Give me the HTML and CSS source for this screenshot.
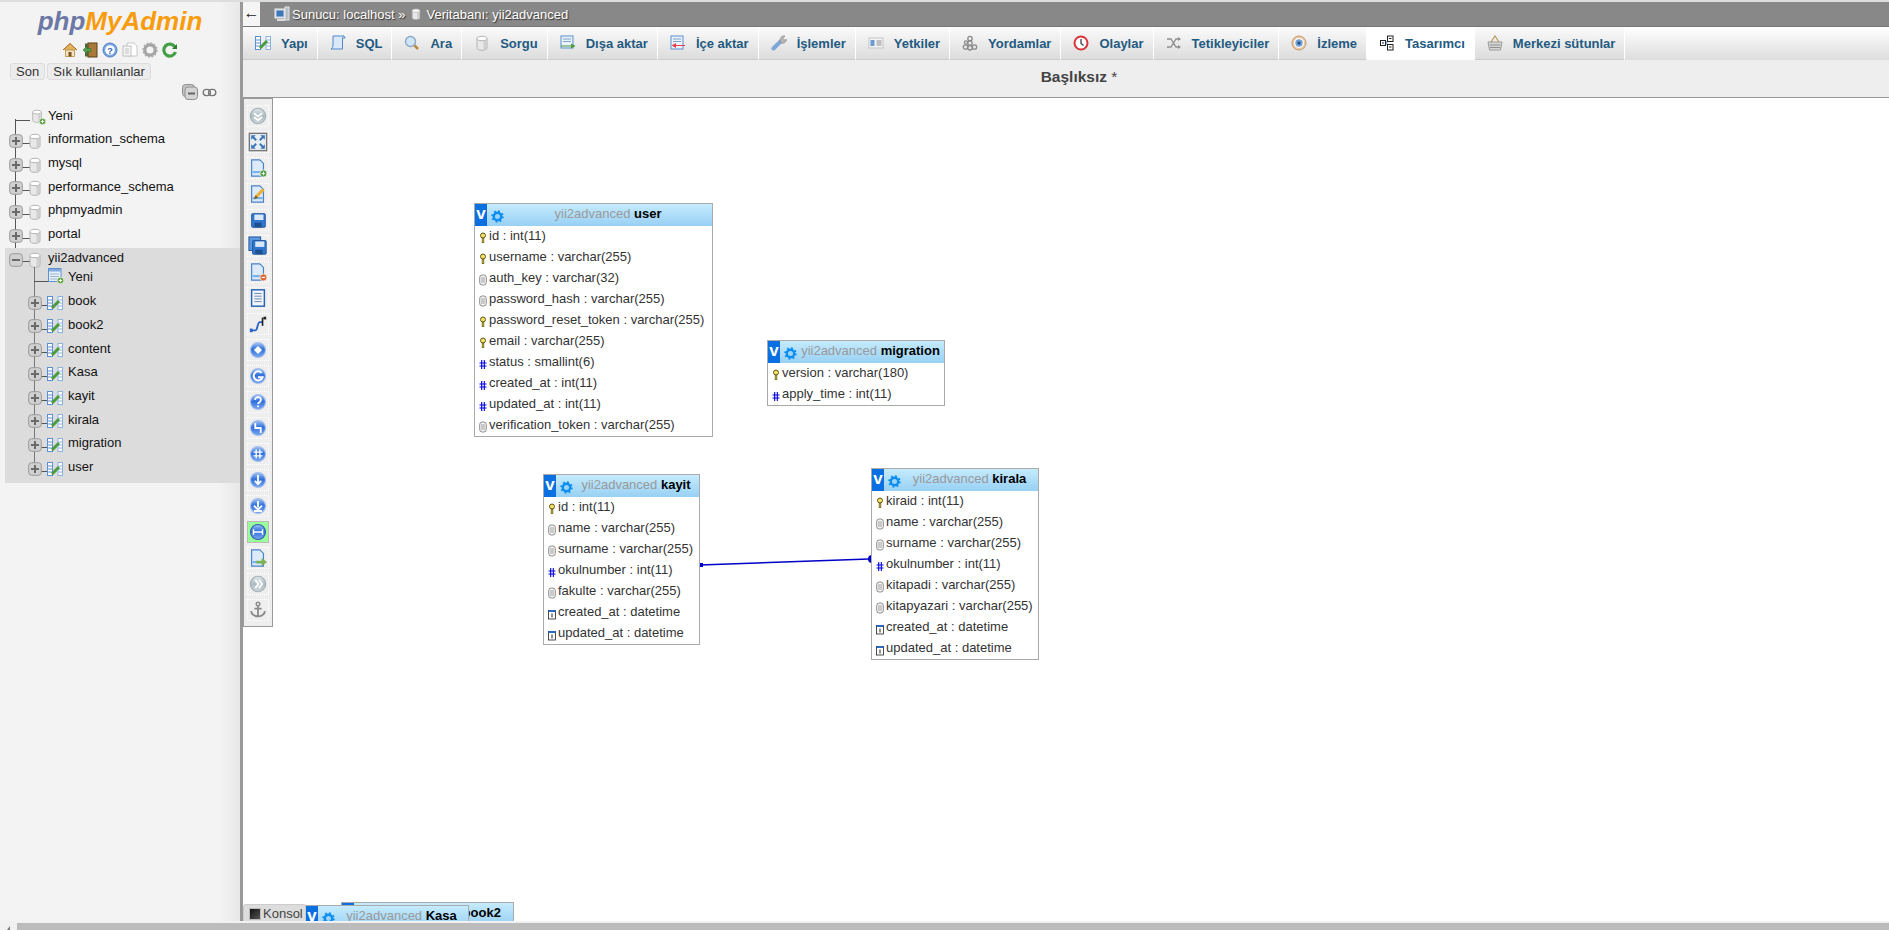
FILE: index.html
```html
<!DOCTYPE html>
<html lang="tr">
<head>
<meta charset="utf-8">
<title>phpMyAdmin</title>
<link rel="stylesheet" href="styles.css">
</head>
<body>
<svg class="defs" width="0" height="0">
  <defs>
    <linearGradient id="gb" x1="0" y1="0" x2="0" y2="1"><stop offset="0" stop-color="#a6c6f4"/><stop offset=".45" stop-color="#2f6fdc"/><stop offset="1" stop-color="#7aa8ee"/></linearGradient>
    <linearGradient id="gg" x1="0" y1="0" x2="0" y2="1"><stop offset="0" stop-color="#dfe6ea"/><stop offset=".5" stop-color="#aebcc3"/><stop offset="1" stop-color="#cdd6da"/></linearGradient>
    <symbol id="i-db" viewBox="0 0 16 16"><path d="M3 3.500v9.500c0 1.400 2.300 2.300 5 2.300s5-.9 5-2.300V3.500z" fill="#e8e8e8" stroke="#b4b4b4"/><ellipse cx="8" cy="3.500" rx="5" ry="2.200" fill="#fff" stroke="#b4b4b4"/><rect x="9.500" y="6" width="2.500" height="8" fill="#cfcfcf"/></symbol>
    <symbol id="i-plus" viewBox="0 0 14 14"><rect x=".7" y=".7" width="12.600" height="12.600" rx="3" fill="#d0d0d0" stroke="#9a9a9a"/><path d="M3 7h8M7 3v8" stroke="#6a6a6a" stroke-width="2"/></symbol>
    <symbol id="i-minus" viewBox="0 0 14 14"><rect x=".7" y=".7" width="12.600" height="12.600" rx="3" fill="#d0d0d0" stroke="#9a9a9a"/><path d="M3 7h8" stroke="#6a6a6a" stroke-width="2"/></symbol>
    <symbol id="i-struct" viewBox="0 0 16 16"><rect x=".5" y="1.500" width="5" height="13" fill="#fff" stroke="#5b8fd0"/><path d="M1 5h4M1 8h4M1 11h4" stroke="#5b8fd0"/><rect x="11" y="1.500" width="4.500" height="13" fill="#fff" stroke="#8ab2df"/><path d="M11.500 5h4M11.500 8h4M11.500 11h4" stroke="#8ab2df"/><path d="M5 13l7-7" stroke="#4c9a3a" stroke-width="3"/></symbol>
    <symbol id="i-newtable" viewBox="0 0 16 16"><rect x=".5" y=".5" width="12.500" height="13" fill="#e6f0fb" stroke="#5b8fd0"/><rect x="1" y="1" width="11.500" height="2.500" fill="#7fa9dc"/><path d="M2 6h9M2 8.500h9M2 11h9" stroke="#9db5d3"/><circle cx="12.500" cy="12.500" r="3.300" fill="#5aa13d" stroke="#fff" stroke-width=".6"/><path d="M10.800 12.500h3.400M12.500 10.800v3.400" stroke="#fff"/></symbol>
    <symbol id="i-newdb" viewBox="0 0 16 16"><use href="#i-db" width="14" height="14"/><circle cx="12.500" cy="12.500" r="3.300" fill="#5aa13d" stroke="#fff" stroke-width=".6"/><path d="M10.800 12.500h3.400M12.500 10.800v3.400" stroke="#fff"/></symbol>
    <symbol id="i-home" viewBox="0 0 16 16"><path d="M1 8l7-6.500L15 8" fill="#e2b25f" stroke="#a6671e"/><rect x="3.500" y="8" width="9" height="6.500" fill="#f3e2bb" stroke="#a6832f" stroke-width=".7"/><rect x="6.500" y="10" width="3" height="4.500" fill="#7c5220"/></symbol>
    <symbol id="i-exit" viewBox="0 0 16 16"><rect x="6" y="1" width="9" height="14" fill="#a87a3a" stroke="#5d4218"/><rect x="3" y="1.500" width="3" height="13" fill="#53633f"/><path d="M1 8l4-4v2.500h4v3H5V12z" fill="#4fa24a" stroke="#2d6a2d" stroke-width=".5"/></symbol>
    <symbol id="i-help" viewBox="0 0 16 16"><circle cx="8" cy="8" r="7" fill="#7aa6e3" stroke="#4f7fc2"/><circle cx="8" cy="8" r="4.800" fill="#fff"/><text x="8" y="11.500" class="icon-q">?</text></symbol>
    <symbol id="i-doc" viewBox="0 0 16 16"><path d="M5 1h7l3 3v10H5z" fill="#fff" stroke="#c8c8c8"/><rect x="1" y="4" width="8" height="10" fill="#f5f5f5" stroke="#c0c0c0"/><rect x="3" y="6" width="4" height="6" fill="#dcdcdc"/></symbol>
    <symbol id="i-gear" viewBox="0 0 16 16"><circle cx="8" cy="8" r="5.200" fill="none" stroke="#a4a4a4" stroke-width="3.200"/><circle cx="8" cy="8" r="6.800" fill="none" stroke="#b0b0b0" stroke-width="1.800" stroke-dasharray="2 1.560"/></symbol>
    <symbol id="i-reload" viewBox="0 0 16 16"><path d="M13 5a6 6 0 1 0 .5 5" fill="none" stroke="#43a047" stroke-width="3.200"/><path d="M10 7h5V2z" fill="#2e7d32"/></symbol>
    <symbol id="i-collapse" viewBox="0 0 16 16"><rect x=".5" y=".5" width="12" height="12" rx="3" fill="#c4c4c4" stroke="#8f8f8f"/><rect x="3" y="3" width="12.500" height="12.500" rx="3" fill="#d4d4d4" stroke="#8f8f8f"/><path d="M6 9.500h7" stroke="#666" stroke-width="2"/></symbol>
    <symbol id="i-link" viewBox="0 0 16 10"><rect x="1" y="1.500" width="8" height="7" rx="3.500" fill="none" stroke="#777" stroke-width="1.500"/><rect x="7" y="1.500" width="8" height="7" rx="3.500" fill="none" stroke="#777" stroke-width="1.500"/></symbol>
    <symbol id="i-server" viewBox="0 0 16 16"><rect x="1" y="3" width="10" height="9" fill="#cfd8e3" stroke="#eee"/><rect x="2.500" y="4.500" width="7" height="6" fill="#3e77b8"/><rect x="11" y="1" width="4" height="13" fill="#b7bec6" stroke="#e4e4e4"/><path d="M3 14h8" stroke="#ddd" stroke-width="2"/></symbol>
    <symbol id="i-sql" viewBox="0 0 16 16"><path d="M3 1h11c-1.500 1-1.500 2-1.500 4v9H1c1.500-1 2-2 2-4z" fill="#d9e9fa" stroke="#4f86c6"/><path d="M13 1c1.500 0 2 1 2 2h-2" fill="#d9e9fa" stroke="#4f86c6"/></symbol>
    <symbol id="i-search" viewBox="0 0 16 16"><path d="M9.500 9.500L14 14" stroke="#c08a45" stroke-width="2.600"/><circle cx="6.500" cy="6.500" r="5" fill="#cfe5fa" stroke="#8fa9c4" stroke-width="1.400"/></symbol>
    <symbol id="i-export" viewBox="0 0 16 16"><rect x="1" y="1" width="12" height="12" fill="#eaf2fb" stroke="#5b8fd0"/><path d="M3 4h8M3 6.500h8" stroke="#7fa3cd"/><path d="M1 10.500h10V8.500l4.500 2.500L11 13.500v-2H1z" fill="#4c9a3a"/></symbol>
    <symbol id="i-import" viewBox="0 0 16 16"><rect x="1" y="1" width="12" height="13" fill="#eaf2fb" stroke="#5b8fd0"/><path d="M3 4h8M3 6.500h8" stroke="#7fa3cd"/><path d="M15 10H6V8l-4.500 2.500L6 13v-2h9z" fill="#e8404a"/></symbol>
    <symbol id="i-wrench" viewBox="0 0 16 16"><path d="M2.500 13.500l7-7" stroke="#7ea5d8" stroke-width="4" stroke-linecap="round"/><path d="M9 5a4 4 0 0 1 5-4l-2 2.500 1 1.500 2.500-.5A4 4 0 0 1 10 8z" fill="#b6b6b6" stroke="#8a8a8a" stroke-width=".6"/></symbol>
    <symbol id="i-priv" viewBox="0 0 16 16"><rect x="1" y="3" width="14" height="10" fill="#f4f4f4" stroke="#c4c4c4"/><rect x="2.500" y="5" width="4" height="6" fill="#6c9ad3"/><path d="M8.500 6h5M8.500 8h5M8.500 10h5" stroke="#8d8d8d"/></symbol>
    <symbol id="i-routines" viewBox="0 0 16 16"><g fill="none" stroke="#8b8b8b" stroke-width="1.300"><circle cx="8" cy="3.500" r="2.200"/><circle cx="8" cy="8" r="2.200"/><circle cx="3.500" cy="12" r="2.200"/><circle cx="8" cy="12.800" r="2.200"/><circle cx="12.500" cy="12" r="2.200"/><circle cx="4" cy="7.500" r="1.600"/></g></symbol>
    <symbol id="i-clock" viewBox="0 0 16 16"><circle cx="8" cy="8" r="6.500" fill="#fff" stroke="#d8353a" stroke-width="2"/><path d="M8 4v4.500l2.500 2" fill="none" stroke="#333" stroke-width="1.200"/></symbol>
    <symbol id="i-trigger" viewBox="0 0 16 16"><path d="M1 4h4l5 8h4M1 12h4l5-8h4" fill="none" stroke="#8f8f8f" stroke-width="1.300"/><path d="M12 2l3 2-3 2zM12 10l3 2-3 2z" fill="#8f8f8f"/></symbol>
    <symbol id="i-eye" viewBox="0 0 16 16"><circle cx="8" cy="8" r="7" fill="#ecc9a5" stroke="#c49a6c"/><circle cx="8" cy="8" r="5" fill="#fff"/><circle cx="8" cy="8" r="3.700" fill="#6e9fd6"/><circle cx="8" cy="8" r="1.500" fill="#24466f"/></symbol>
    <symbol id="i-designer" viewBox="0 0 16 16"><g fill="#fff" stroke="#222"><rect x="8.500" y="1" width="5.500" height="5.500"/><rect x="8.500" y="9.500" width="5.500" height="5.500"/><rect x="1.500" y="5.500" width="5" height="5"/></g><path d="M10 3.500h2.500M10 12h2.500M3 8h2" stroke="#222"/><path d="M6.500 7h2M6.500 9h2" stroke="#1b5fb3"/></symbol>
    <symbol id="i-basket" viewBox="0 0 16 16"><path d="M1 7h14l-1.500 8h-11z" fill="#d6d6d6" stroke="#9a9a9a"/><path d="M4 7l4-6 4 6" fill="none" stroke="#b79a5a" stroke-width="1.200"/><path d="M3 10h10M3 12.500h10" stroke="#8f8f8f"/></symbol>
    <symbol id="i-key" viewBox="0 0 8 12"><circle cx="4" cy="3.500" r="2.500" fill="#f3e066" stroke="#5f5614"/><path d="M4 6v5" stroke="#5f5614" stroke-width="2.400"/><path d="M4 6.500v4" stroke="#e9d455" stroke-width=".9"/></symbol>
    <symbol id="i-text" viewBox="0 0 8 12"><rect x=".7" y="1" width="6.600" height="10" rx="2.500" fill="#f3f3f3" stroke="#8c8c8c"/><path d="M2 4h4M2 6h4M2 8h4" stroke="#8c8c8c" stroke-width=".8"/></symbol>
    <symbol id="i-num" viewBox="0 0 8 12"><path d="M2.700 2v9M5.300 2v9M.5 5h7M.5 8h7" stroke="#0000e0" stroke-width="1.100" fill="none"/></symbol>
    <symbol id="i-date" viewBox="0 0 8 12"><rect x=".5" y="2.500" width="7" height="8.500" fill="#fff" stroke="#222" stroke-width=".8"/><rect x=".5" y="2" width="7" height="2" fill="#2769c9"/><path d="M4 5.500v4" stroke="#222"/></symbol>
    <symbol id="i-cog" viewBox="0 0 14 14"><circle cx="7" cy="7" r="4" fill="#9fd4f7" stroke="#0c8ff0" stroke-width="2.600"/><circle cx="7" cy="7" r="5.800" fill="none" stroke="#0c8ff0" stroke-width="1.800" stroke-dasharray="2 2.550"/></symbol>
    <symbol id="t-gray" viewBox="0 0 22 22"><circle cx="11" cy="11" r="8.500" fill="url(#gg)" stroke="#a3b1b7" stroke-width="1.200"/></symbol>
    <symbol id="t-round" viewBox="0 0 22 22"><circle cx="11" cy="11" r="8.250" fill="url(#gb)" stroke="#a4c0ec" stroke-width="1.200"/></symbol>
    <symbol id="t-down" viewBox="0 0 22 22"><use href="#t-gray"/><path d="M6.500 8l4.500 3.500L15.500 8M6.500 12l4.500 3.500 4.500-3.500" fill="none" stroke="#fff" stroke-width="2"/></symbol>
    <symbol id="t-right" viewBox="0 0 22 22"><use href="#t-gray"/><path d="M8 6.500l3.500 4.500L8 15.500M12 6.500l3.500 4.500-3.500 4.500" fill="none" stroke="#fff" stroke-width="2"/></symbol>
    <symbol id="t-full" viewBox="0 0 22 22"><rect x="1.500" y="1.500" width="19" height="19" fill="#e9eef4" stroke="#777" stroke-width="1.500"/><path d="M5 5l4 4M17 5l-4 4M5 17l4-4M17 17l-4-4" stroke="#3c75b6" stroke-width="2.200"/><path d="M3.500 3.500h5l-5 5zM18.500 3.500h-5l5 5zM3.500 18.500h5l-5-5zM18.500 18.500h-5l5-5z" fill="#3c75b6"/></symbol>
    <symbol id="t-page" viewBox="0 0 22 22"><path d="M4 2h9l4 4v14H4z" fill="#dcebfb" stroke="#4a82c8" stroke-width="1.300"/><path d="M5 15.500h11" stroke="#78b4ea" stroke-width="2.400"/></symbol>
    <symbol id="t-add" viewBox="0 0 22 22"><use href="#t-page"/><circle cx="17" cy="17" r="3.800" fill="#4a9a3a" stroke="#fff" stroke-width=".7"/><path d="M15 17h4M17 15v4" stroke="#fff"/></symbol>
    <symbol id="t-edit" viewBox="0 0 22 22"><use href="#t-page"/><path d="M8 15l9-9" stroke="#e8b23c" stroke-width="3.600"/><path d="M8.500 12.500l-2 4.500 4.500-2z" fill="#7a5a2a"/></symbol>
    <symbol id="t-del" viewBox="0 0 22 22"><use href="#t-page"/><circle cx="17" cy="17" r="3.800" fill="#e0602a" stroke="#fff" stroke-width=".7"/><path d="M15 17h4" stroke="#fff" stroke-width="1.400"/></symbol>
    <symbol id="t-pexp" viewBox="0 0 22 22"><use href="#t-page"/><path d="M9 14h6v-3l6 4.500-6 4.500v-3H9z" fill="#7cb35a"/></symbol>
    <symbol id="t-save" viewBox="0 0 22 22"><rect x="4" y="4" width="15" height="15" rx="1" fill="#2f77cf" stroke="#1d549b"/><rect x="7" y="5" width="10" height="6" fill="#d8e8f8"/><rect x="7" y="14" width="8" height="5" fill="#1e4f8e"/></symbol>
    <symbol id="t-save2" viewBox="0 0 22 22"><rect x="1" y="1" width="13" height="15" fill="#5b97df" stroke="#1d549b"/><rect x="5" y="5" width="15" height="15" rx="1" fill="#2f77cf" stroke="#1d549b"/><rect x="8" y="6" width="10" height="6" fill="#d8e8f8"/><rect x="8" y="15" width="8" height="5" fill="#1e4f8e"/></symbol>
    <symbol id="t-list" viewBox="0 0 22 22"><rect x="4" y="2" width="14" height="18" fill="#f2f6fb" stroke="#2a63b5" stroke-width="1.600"/><path d="M7 6h8M7 9h8M7 12h8M7 15h8" stroke="#5a7da8"/></symbol>
    <symbol id="t-rel" viewBox="0 0 22 22"><path d="M3 18h5c3 0 2-9 5-9h3" fill="none" stroke="#2a63c5" stroke-width="2"/><path d="M16 4v9" stroke="#222" stroke-width="1.800"/><rect x="17" y="3" width="3" height="3" fill="#222"/><rect x="2" y="16" width="3" height="4" fill="#2a63c5"/></symbol>
    <symbol id="t-r1" viewBox="0 0 22 22"><use href="#t-round"/><path d="M11 6.500l4.500 4.500-4.500 4.500L6.500 11z" fill="#fff"/></symbol>
    <symbol id="t-r2" viewBox="0 0 22 22"><use href="#t-round"/><path d="M15 7.500a5 5 0 1 0 1 5h-5" fill="none" stroke="#fff" stroke-width="2.200"/></symbol>
    <symbol id="t-r3" viewBox="0 0 22 22"><use href="#t-round"/><path d="M7.800 8.800c0-4.300 6.800-4 6.400 0 0 2.400-3.200 2.400-3.200 4.500" fill="none" stroke="#fff" stroke-width="2"/><circle cx="11" cy="15.700" r="1.200" fill="#fff"/></symbol>
    <symbol id="t-r4" viewBox="0 0 22 22"><use href="#t-round"/><path d="M8 5.500V11h6v5.500" fill="none" stroke="#fff" stroke-width="2"/></symbol>
    <symbol id="t-r5" viewBox="0 0 22 22"><use href="#t-round"/><path d="M9 6v10M13 6v10M6 9h10M6 13h10" stroke="#fff" stroke-width="1.500"/></symbol>
    <symbol id="t-r6" viewBox="0 0 22 22"><use href="#t-round"/><path d="M11 5.500v10M7.500 12l3.500 3.500 3.500-3.500" fill="none" stroke="#fff" stroke-width="2"/></symbol>
    <symbol id="t-r7" viewBox="0 0 22 22"><use href="#t-round"/><path d="M11 5.500v7M6.500 10.500l4.500 4.500 4.500-4.500M6.500 16.500h9" fill="none" stroke="#fff" stroke-width="2"/></symbol>
    <symbol id="t-r8" viewBox="0 0 22 22"><circle cx="11" cy="11" r="8.250" fill="url(#gb)" stroke="#2f5fb0" stroke-width="1.200"/><path d="M6 11h10M6 8v6M16 8v6" fill="none" stroke="#fff" stroke-width="1.600"/></symbol>
    <symbol id="t-anchor" viewBox="0 0 22 22"><circle cx="11" cy="4.500" r="2" fill="none" stroke="#8a8a8a" stroke-width="1.500"/><path d="M11 6.500V18M7 9.500h8M3.500 12c0 4 4 6 7.500 6s7.500-2 7.500-6" fill="none" stroke="#8a8a8a" stroke-width="2"/></symbol>
  </defs>
</svg>

<div class="page">
  <aside class="nav">
    <div class="logo"><span class="logo-php">php</span><span class="logo-my">MyAdmin</span></div>
    <div class="nav-icons">
      <svg class="ic16"><use href="#i-home"/></svg>
      <svg class="ic16"><use href="#i-exit"/></svg>
      <svg class="ic16"><use href="#i-help"/></svg>
      <svg class="ic16"><use href="#i-doc"/></svg>
      <svg class="ic16"><use href="#i-gear"/></svg>
      <svg class="ic16"><use href="#i-reload"/></svg>
    </div>
    <div class="nav-tabs"><span class="nav-tab">Son</span><span class="nav-tab">Sık kullanılanlar</span></div>
    <div class="nav-tools">
      <svg class="ic16"><use href="#i-collapse"/></svg>
      <svg class="ic-link"><use href="#i-link"/></svg>
    </div>
    <ul class="tree">
      <li class="node node-first"><svg class="ic16"><use href="#i-newdb"/></svg><span>Yeni</span></li>
      <li class="node"><svg class="ic-exp"><use href="#i-plus"/></svg><svg class="ic16"><use href="#i-db"/></svg><span>information_schema</span></li>
      <li class="node"><svg class="ic-exp"><use href="#i-plus"/></svg><svg class="ic16"><use href="#i-db"/></svg><span>mysql</span></li>
      <li class="node"><svg class="ic-exp"><use href="#i-plus"/></svg><svg class="ic16"><use href="#i-db"/></svg><span>performance_schema</span></li>
      <li class="node"><svg class="ic-exp"><use href="#i-plus"/></svg><svg class="ic16"><use href="#i-db"/></svg><span>phpmyadmin</span></li>
      <li class="node"><svg class="ic-exp"><use href="#i-plus"/></svg><svg class="ic16"><use href="#i-db"/></svg><span>portal</span></li>
      <li class="open-db">
        <div class="node"><svg class="ic-exp"><use href="#i-minus"/></svg><svg class="ic16"><use href="#i-db"/></svg><span>yii2advanced</span></div>
        <ul class="subtree">
          <li class="node sub-new"><svg class="ic16"><use href="#i-newtable"/></svg><span>Yeni</span></li>
          <li class="node"><svg class="ic-exp"><use href="#i-plus"/></svg><svg class="ic16"><use href="#i-struct"/></svg><span>book</span></li>
          <li class="node"><svg class="ic-exp"><use href="#i-plus"/></svg><svg class="ic16"><use href="#i-struct"/></svg><span>book2</span></li>
          <li class="node"><svg class="ic-exp"><use href="#i-plus"/></svg><svg class="ic16"><use href="#i-struct"/></svg><span>content</span></li>
          <li class="node"><svg class="ic-exp"><use href="#i-plus"/></svg><svg class="ic16"><use href="#i-struct"/></svg><span>Kasa</span></li>
          <li class="node"><svg class="ic-exp"><use href="#i-plus"/></svg><svg class="ic16"><use href="#i-struct"/></svg><span>kayit</span></li>
          <li class="node"><svg class="ic-exp"><use href="#i-plus"/></svg><svg class="ic16"><use href="#i-struct"/></svg><span>kirala</span></li>
          <li class="node"><svg class="ic-exp"><use href="#i-plus"/></svg><svg class="ic16"><use href="#i-struct"/></svg><span>migration</span></li>
          <li class="node"><svg class="ic-exp"><use href="#i-plus"/></svg><svg class="ic16"><use href="#i-struct"/></svg><span>user</span></li>
        </ul>
      </li>
    </ul>
  </aside>

  <main class="main">
    <div class="crumbs">
      <span class="back">←</span>
      <svg class="ic16"><use href="#i-server"/></svg><span>Sunucu: localhost »</span>
      <svg class="ic-crumbdb"><use href="#i-db"/></svg><span>Veritabanı: yii2advanced</span>
    </div>
    <nav class="tabs">
      <a class="tab"><svg class="ic16"><use href="#i-struct"/></svg>Yapı</a>
      <a class="tab"><svg class="ic16"><use href="#i-sql"/></svg>SQL</a>
      <a class="tab"><svg class="ic16"><use href="#i-search"/></svg>Ara</a>
      <a class="tab"><svg class="ic16"><use href="#i-db"/></svg>Sorgu</a>
      <a class="tab"><svg class="ic16"><use href="#i-export"/></svg>Dışa aktar</a>
      <a class="tab"><svg class="ic16"><use href="#i-import"/></svg>İçe aktar</a>
      <a class="tab"><svg class="ic16"><use href="#i-wrench"/></svg>İşlemler</a>
      <a class="tab"><svg class="ic16"><use href="#i-priv"/></svg>Yetkiler</a>
      <a class="tab"><svg class="ic16"><use href="#i-routines"/></svg>Yordamlar</a>
      <a class="tab"><svg class="ic16"><use href="#i-clock"/></svg>Olaylar</a>
      <a class="tab"><svg class="ic16"><use href="#i-trigger"/></svg>Tetikleyiciler</a>
      <a class="tab"><svg class="ic16"><use href="#i-eye"/></svg>İzleme</a>
      <a class="tab tab-active"><svg class="ic16"><use href="#i-designer"/></svg>Tasarımcı</a>
      <a class="tab"><svg class="ic16"><use href="#i-basket"/></svg>Merkezi sütunlar</a>
    </nav>
    <div class="title">Başlıksız <span class="star">*</span></div>

    <section class="canvas">
      <svg class="relation" width="1646" height="832"><path d="M457 467L626 461" stroke="#0000c8" stroke-width="1.500"/><rect x="456" y="465" width="4" height="4" fill="#0000c8"/><circle cx="629" cy="461" r="4" fill="#0000c8"/></svg>

      <div class="toolbar">
        <span class="tool"><svg><use href="#t-down"/></svg></span>
        <span class="tool"><svg><use href="#t-full"/></svg></span>
        <span class="tool"><svg><use href="#t-add"/></svg></span>
        <span class="tool"><svg><use href="#t-edit"/></svg></span>
        <span class="tool"><svg><use href="#t-save"/></svg></span>
        <span class="tool"><svg><use href="#t-save2"/></svg></span>
        <span class="tool"><svg><use href="#t-del"/></svg></span>
        <span class="tool"><svg><use href="#t-list"/></svg></span>
        <span class="tool"><svg><use href="#t-rel"/></svg></span>
        <span class="tool"><svg><use href="#t-r1"/></svg></span>
        <span class="tool"><svg><use href="#t-r2"/></svg></span>
        <span class="tool"><svg><use href="#t-r3"/></svg></span>
        <span class="tool"><svg><use href="#t-r4"/></svg></span>
        <span class="tool"><svg><use href="#t-r5"/></svg></span>
        <span class="tool"><svg><use href="#t-r6"/></svg></span>
        <span class="tool"><svg><use href="#t-r7"/></svg></span>
        <span class="tool tool-on"><svg><use href="#t-r8"/></svg></span>
        <span class="tool"><svg><use href="#t-pexp"/></svg></span>
        <span class="tool"><svg><use href="#t-right"/></svg></span>
        <span class="tool"><svg><use href="#t-anchor"/></svg></span>
      </div>

      <article class="dbt t-user">
        <header class="dbt-head"><span class="dbt-v">v</span><svg class="dbt-cog"><use href="#i-cog"/></svg><span class="dbt-name">yii2advanced <b>user</b></span></header>
        <div class="row"><svg><use href="#i-key"/></svg>id : int(11)</div>
        <div class="row"><svg><use href="#i-key"/></svg>username : varchar(255)</div>
        <div class="row"><svg><use href="#i-text"/></svg>auth_key : varchar(32)</div>
        <div class="row"><svg><use href="#i-text"/></svg>password_hash : varchar(255)</div>
        <div class="row"><svg><use href="#i-key"/></svg>password_reset_token : varchar(255)</div>
        <div class="row"><svg><use href="#i-key"/></svg>email : varchar(255)</div>
        <div class="row"><svg><use href="#i-num"/></svg>status : smallint(6)</div>
        <div class="row"><svg><use href="#i-num"/></svg>created_at : int(11)</div>
        <div class="row"><svg><use href="#i-num"/></svg>updated_at : int(11)</div>
        <div class="row"><svg><use href="#i-text"/></svg>verification_token : varchar(255)</div>
      </article>

      <article class="dbt t-migration">
        <header class="dbt-head"><span class="dbt-v">v</span><svg class="dbt-cog"><use href="#i-cog"/></svg><span class="dbt-name">yii2advanced <b>migration</b></span></header>
        <div class="row"><svg><use href="#i-key"/></svg>version : varchar(180)</div>
        <div class="row"><svg><use href="#i-num"/></svg>apply_time : int(11)</div>
      </article>

      <article class="dbt t-kayit">
        <header class="dbt-head"><span class="dbt-v">v</span><svg class="dbt-cog"><use href="#i-cog"/></svg><span class="dbt-name">yii2advanced <b>kayit</b></span></header>
        <div class="row"><svg><use href="#i-key"/></svg>id : int(11)</div>
        <div class="row"><svg><use href="#i-text"/></svg>name : varchar(255)</div>
        <div class="row"><svg><use href="#i-text"/></svg>surname : varchar(255)</div>
        <div class="row"><svg><use href="#i-num"/></svg>okulnumber : int(11)</div>
        <div class="row"><svg><use href="#i-text"/></svg>fakulte : varchar(255)</div>
        <div class="row"><svg><use href="#i-date"/></svg>created_at : datetime</div>
        <div class="row"><svg><use href="#i-date"/></svg>updated_at : datetime</div>
      </article>

      <article class="dbt t-kirala">
        <header class="dbt-head"><span class="dbt-v">v</span><svg class="dbt-cog"><use href="#i-cog"/></svg><span class="dbt-name">yii2advanced <b>kirala</b></span></header>
        <div class="row"><svg><use href="#i-key"/></svg>kiraid : int(11)</div>
        <div class="row"><svg><use href="#i-text"/></svg>name : varchar(255)</div>
        <div class="row"><svg><use href="#i-text"/></svg>surname : varchar(255)</div>
        <div class="row"><svg><use href="#i-num"/></svg>okulnumber : int(11)</div>
        <div class="row"><svg><use href="#i-text"/></svg>kitapadi : varchar(255)</div>
        <div class="row"><svg><use href="#i-text"/></svg>kitapyazari : varchar(255)</div>
        <div class="row"><svg><use href="#i-date"/></svg>created_at : datetime</div>
        <div class="row"><svg><use href="#i-date"/></svg>updated_at : datetime</div>
      </article>

      <article class="dbt t-book2">
        <header class="dbt-head"><span class="dbt-v">v</span><svg class="dbt-cog"><use href="#i-cog"/></svg><span class="dbt-name">yii2advanced <b>book2</b></span></header>
      </article>
      <article class="dbt t-kasa">
        <header class="dbt-head"><span class="dbt-v">v</span><svg class="dbt-cog"><use href="#i-cog"/></svg><span class="dbt-name">yii2advanced <b>Kasa</b></span></header>
      </article>

      <div class="console"><span class="console-ic"></span>Konsol</div>
    </section>
  </main>
</div>
<div class="hscroll"><div class="hthumb"></div></div>
</body>
</html>
```

FILE: styles.css
```css
* { box-sizing: border-box; }
html, body { margin: 0; height: 100%; overflow: hidden; }
body { font-family: "Liberation Sans", Arial, sans-serif; font-size: 13px; color: #000; background: #fff; display: flex; flex-direction: column; }
ul { list-style: none; margin: 0; padding: 0; }
.defs { position: absolute; }
.icon-q { font: bold 9px "Liberation Sans", sans-serif; fill: #2f62ac; text-anchor: middle; }
.ic16 { width: 16px; height: 16px; flex: none; display: block; }

.page { flex: 1; display: flex; min-height: 0; border-top: 2px solid #ddd; }
.hscroll { height: 9px; background: #f1f1f1; padding: 2px 0 0 17px; flex: none; position: relative; }
.hscroll::before { content: ""; position: absolute; left: 7px; bottom: 0; border-left: 3px solid transparent; border-bottom: 4px solid #777; }
.hthumb { height: 7px; background: #bcbcbc; }

/* Navigation */
.nav { width: 243px; flex: none; background: linear-gradient(to right, #f3f3f3 220px, #e8e8e8 240px); border-right: 3px solid #999; display: flex; flex-direction: column; align-items: stretch; }
.logo { height: 33px; padding-top: 5px; text-align: center; font-size: 26px; font-weight: bold; font-style: italic; line-height: 28px; }
.logo-php { color: #6c78a5; }
.logo-my { color: #f89c0e; }
.nav-icons { display: flex; justify-content: center; gap: 4px; height: 28px; padding-top: 7px; }
.nav-tabs { display: flex; gap: 2px; padding: 0 0 0 10px; }
.nav-tab { font-size: 13px; color: #333; padding: 0 5px; height: 17px; line-height: 16px; background: #ececec; border: 1px solid #ddd; border-radius: 3px; }
.nav-tools { display: flex; justify-content: flex-end; align-items: center; gap: 4px; padding: 0 23px 0 0; height: 24px; }
.ic-link { width: 15px; height: 9px; display: block; }
.tree { padding: 1px 0 0 5px; color: #000; position: relative; }
.tree::before { content: ""; position: absolute; left: 15px; top: 15px; height: 133px; border-left: 1px solid #555; }
.node { display: flex; align-items: center; height: 23.7px; padding-left: 4px; gap: 8px; position: relative; }
.node span { color: #111; white-space: nowrap; position: relative; top: -1px; }
.node > svg { position: relative; margin-top: 2px; }
.node::before { content: ""; position: absolute; left: 17px; top: 15px; width: 8px; border-top: 1px solid #555; }
.ic-exp { width: 14px; height: 14px; flex: none; display: block; }
.node .ic16 { margin-left: -4px; margin-right: -3px; }
.node-first { padding-left: 25px; gap: 6px; height: 23px; }
.node-first::before { left: 10px; width: 15px; }
.node-first .ic16 { margin-left: 0; margin-right: -4px; margin-top: 0; }
.open-db { background: #dcdcdc; height: 235px; margin-top: 1.5px; position: relative; }
.open-db > .node { height: 19px; padding-top: 3px; }
.open-db > .node::before { top: 13px; }
.subtree { padding-left: 19px; position: relative; }
.subtree::before { content: ""; position: absolute; left: 29px; top: 0; height: 199px; border-left: 1px solid #777; }
.subtree .ic16 { margin-left: -3px; margin-right: -3px; }
.subtree .sub-new { padding-left: 24px; gap: 6px; height: 19px; margin-bottom: 4px; }
.subtree .sub-new::before { left: 10px; width: 14px; top: 14px; }
.subtree .sub-new .ic16 { margin-left: 0; margin-right: -2px; margin-top: 0; }
.subtree .sub-new span { top: 0; }

/* Main */
.main { flex: 1; min-width: 0; display: flex; flex-direction: column; }
.crumbs { height: 25px; background: #888; color: #fff; display: flex; align-items: center; text-shadow: 1px 1px 1px #333; font-size: 13px; border-bottom: 1px solid #777; gap: 2px; flex: none; }
.back { width: 17px; height: 24px; background: #f5f5f5; color: #222; text-shadow: none; text-align: center; line-height: 22px; font-size: 16px; margin-right: 12px; flex: none; }
.ic-crumbdb { width: 12px; height: 14px; margin: 0 2px 0 3px; display: block; }
.tabs { height: 33px; display: flex; background: linear-gradient(#fff, #ddd); flex: none; }
.tab { display: flex; align-items: center; gap: 10px; padding: 0 9px 0 12px; font-weight: bold; font-size: 13px; color: #235a81; background: linear-gradient(#fbfbfb, #dcdcdc); border-right: 1px solid #fff; border-bottom: 1px solid #ccc; white-space: nowrap; }
.tab-active { background: #fff; border-bottom-color: #fff; }
.title { height: 38px; flex: none; background: #eee; border-bottom: 1px solid #999; text-align: center; font-weight: bold; font-size: 15.500px; line-height: 34px; color: #444; padding-left: 26px; }
.star { font-weight: normal; }
.canvas { flex: 1; position: relative; overflow: hidden; background: #fff; }
.relation { position: absolute; left: 0; top: 0; }

.toolbar { position: absolute; left: 0; top: 0; width: 30px; height: 529px; background: #eee; border: 1px solid #999; padding: 6px 0 0 3px; display: flex; flex-direction: column; gap: 4px; }
.tool { width: 22px; height: 22px; flex: none; border: 1px dotted #fff; display: flex; align-items: center; justify-content: center; }
.tool svg { width: 20px; height: 20px; display: block; }
.tool-on { background: #9f9; border: 1px solid #bbb; }

/* Designer tables */
.dbt { position: absolute; background: #fff; border: 1px solid #aaa; font-size: 13px; white-space: nowrap; }
.dbt-head { height: 22px; background: linear-gradient(#c5ebfd, #98d0f4); display: flex; align-items: center; }
.dbt-v { width: 12px; height: 22px; background: #0a6fe0; color: #fff; font-weight: bold; font-size: 17px; line-height: 19px; text-align: center; flex: none; }
.dbt-cog { width: 13px; height: 13px; margin: 3px 0 0 4px; flex: none; display: block; }
.dbt-name { flex: 1; text-align: center; color: #999; padding-bottom: 3px; }
.dbt-name b { color: #000; }
.row { height: 21px; display: flex; align-items: center; padding: 0 0 2px 4px; color: #333; }
.row svg { width: 8px; height: 12px; margin-right: 2px; margin-top: 4px; flex: none; display: block; }
.t-user { left: 231px; top: 105px; width: 239px; }
.t-migration { left: 524px; top: 242px; width: 178px; }
.t-kayit { left: 300px; top: 376px; width: 157px; }
.t-kirala { left: 628px; top: 370px; width: 168px; }
.t-book2 { left: 98px; top: 804px; width: 173px; }
.t-kasa { left: 62px; top: 807px; width: 164px; }
.console { position: absolute; left: 0; top: 806px; width: 63px; height: 18px; background: #ddd; border: 1px solid #ccc; border-bottom: 0; border-radius: 3px 3px 0 0; color: #444; font-size: 13px; display: flex; align-items: center; padding-left: 5px; gap: 2px; z-index: 3; }
.console-ic { width: 12px; height: 12px; background: linear-gradient(135deg, #111, #555); border: 1px solid #bbb; flex: none; }
```
